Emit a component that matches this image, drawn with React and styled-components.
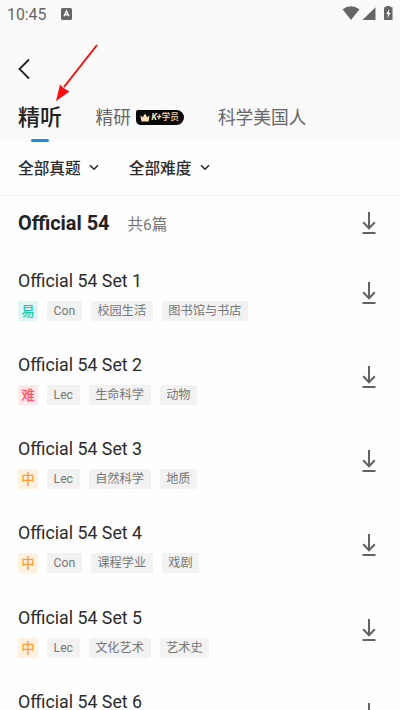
import React from 'react'
import styled, { createGlobalStyle } from 'styled-components'

const levels = {
    easy: { text: '易', color: '#1fc4ab', background: '#e0f6f4' },
    medium: { text: '中', color: '#ff9f33', background: '#fff1e0' },
    hard: { text: '难', color: '#ff5468', background: '#ffe8ea' },
}

const sets = [
    { name: 'Official 54 Set 1', level: 'easy', tags: ['Con', '校园生活', '图书馆与书店'] },
    { name: 'Official 54 Set 2', level: 'hard', tags: ['Lec', '生命科学', '动物'] },
    { name: 'Official 54 Set 3', level: 'medium', tags: ['Lec', '自然科学', '地质'] },
    { name: 'Official 54 Set 4', level: 'medium', tags: ['Con', '课程学业', '戏剧'] },
    { name: 'Official 54 Set 5', level: 'medium', tags: ['Lec', '文化艺术', '艺术史'] },
    { name: 'Official 54 Set 6', tags: [] },
]

function DownloadIcon() {
    return (
        <svg width="14" height="24" viewBox="0 0 14 24" fill="none" stroke="#626262" strokeWidth="2">
            <path d="M7 1V17.5M1.2 11.2L7 17.2L12.8 11.2" />
            <path d="M0.5 22H13.5" />
        </svg>
    )
}

function ChevronIcon() {
    return (
        <svg width="10" height="7" viewBox="0 0 10 7" fill="none" stroke="#2b2b2b" strokeWidth="1.6">
            <path d="M1 1.2L5 5.2L9 1.2" />
        </svg>
    )
}

function App() {
    return (
        <Screen>
            <GlobalStyle />
            <Header>
                <StatusBar>
                    <Clock>10:45</Clock>
                    <svg width="11" height="12" viewBox="0 0 11 12">
                        <rect width="11" height="12" rx="1.5" fill="#666" />
                        <path d="M3 8.3L5.5 3L8 8.3M3.9 6.8H7.1" fill="none" stroke="#fafafa" strokeWidth="1.4" />
                    </svg>
                    <StatusIcons>
                        <svg width="52" height="16" viewBox="0 0 52 16" fill="#666">
                            <path d="M0.5 3.2Q9 -2.8 17.5 3.2L9 14Z" />
                            <path d="M33.5 1.3V14H20.5Z" />
                            <path d="M42 1.2H44V0H48.5V1.2H50.5V14H42Z" />
                            <path d="M47.3 3L44.2 8H46L45.4 12L48.6 6.8H46.8Z" fill="#fafafa" />
                        </svg>
                    </StatusIcons>
                </StatusBar>
                <NavBar>
                    <svg width="12" height="22" viewBox="0 0 12 22" fill="none" stroke="#222" strokeWidth="1.8">
                        <path d="M11 1.5L1.5 11L11 20.5" />
                    </svg>
                </NavBar>
                <Tabs>
                    <ActiveTab>精听</ActiveTab>
                    <Tab $left={33.5}>精研</Tab>
                    <MemberBadge>
                        <svg width="10" height="9" viewBox="0 0 10 9" fill="#f7dfb2">
                            <path d="M0.4 2.4L2.8 4.3L5 0.4L7.2 4.3L9.6 2.4L8.6 8.4H1.4Z" />
                        </svg>
                        <MemberText><i>K+</i>学员</MemberText>
                    </MemberBadge>
                    <Tab $left={34.4}>科学美国人</Tab>
                </Tabs>
            </Header>
            <FilterBar>
                <Filter>全部真题<ChevronIcon /></Filter>
                <Filter>全部难度<ChevronIcon /></Filter>
            </FilterBar>
            <SectionHead>
                <SectionTitle>Official 54</SectionTitle>
                <SectionCount>共6篇</SectionCount>
                <DownloadIcon />
            </SectionHead>
            <List>
                {sets.map((set) => (
                    <Row key={set.name}>
                        <div>
                            <SetName>{set.name}</SetName>
                            <TagList>
                                {set.level && <Level $level={levels[set.level]}>{levels[set.level].text}</Level>}
                                {set.tags.map((tag) => <Tag key={tag}>{tag}</Tag>)}
                            </TagList>
                        </div>
                        <DownloadIcon />
                    </Row>
                ))}
            </List>
            <Pointer width="50" height="64" viewBox="0 0 50 64">
                <path d="M47 5L14 47" stroke="#fb0d0d" strokeWidth="2" />
                <path d="M6 61L10 44.5L13.5 48L19.5 51.5Z" fill="#fb0d0d" />
            </Pointer>
        </Screen>
    )
}

export default App

const GlobalStyle = createGlobalStyle`
* {
    box-sizing: border-box;
}
body {
    margin: 0;
    background: #fefefe;
    overflow: hidden;
    font-family: Roboto, "Noto Sans CJK SC", sans-serif;
}
svg {
    display: block;
    flex-shrink: 0;
}
`

const Screen = styled.div`
position: relative;
width: 400px;
height: 710px;
overflow: hidden;
background: #fefefe;
color: #2b2b2b;
`

const Header = styled.header`
height: 142px;
background: #fafafa;
`

const StatusBar = styled.div`
display: flex;
align-items: center;
height: 28px;
padding: 0 6px 0 7px;
`

const Clock = styled.span`
width: 54px;
font-size: 15.8px;
color: #666;
`

const StatusIcons = styled.div`
margin-left: auto;
`

const NavBar = styled.div`
display: flex;
align-items: center;
height: 66px;
padding: 15px 18px 0;
`

const Tabs = styled.nav`
display: flex;
align-items: center;
height: 48px;
padding-left: 18px;
`

const Tab = styled.span`
margin-left: ${(props) => props.$left}px;
font-size: 17.7px;
line-height: 26px;
color: #666;
white-space: nowrap;
`

const ActiveTab = styled.span`
position: relative;
font-size: 22px;
line-height: 32px;
font-weight: 500;
color: #222;
&::after {
    content: '';
    position: absolute;
    left: 13px;
    bottom: -8px;
    width: 18px;
    height: 3px;
    border-radius: 2px;
    background: #168fe8;
}
`

const MemberBadge = styled.span`
display: flex;
align-items: center;
gap: 2px;
width: 48px;
height: 15px;
margin: -1px 0 0 4.6px;
padding-left: 4px;
border-radius: 2px 8px 8px 5px;
background: #0b0a0a;
`

const MemberText = styled.span`
font-size: 8.7px;
line-height: 15px;
font-weight: 500;
color: #f7dfb2;
white-space: nowrap;
i {
    font-weight: 800;
}
`

const FilterBar = styled.div`
display: flex;
align-items: center;
gap: 30px;
height: 54px;
padding: 0 0 2px 18px;
border-bottom: 1px solid #f0f0f0;
`

const Filter = styled.div`
display: flex;
align-items: center;
gap: 8px;
font-size: 15.7px;
font-weight: 500;
`

const SectionHead = styled.div`
display: flex;
align-items: center;
height: 54px;
padding-right: 24px;
padding-left: 18px;
svg {
    margin-left: auto;
}
`

const SectionTitle = styled.h2`
margin: 0;
font-size: 19.9px;
font-weight: 700;
color: #222;
`

const SectionCount = styled.span`
margin-left: 18px;
font-size: 15.5px;
color: #777;
`

const List = styled.div`
padding: 2.4px 24px 0 18px;
`

const Row = styled.div`
display: flex;
align-items: center;
justify-content: space-between;
height: 84.3px;
> svg {
    margin-bottom: 4px;
}
`

const SetName = styled.div`
font-size: 17.8px;
line-height: 23px;
`

const TagList = styled.div`
display: flex;
gap: 9px;
margin-top: 9px;
height: 20px;
`

const Tag = styled.span`
height: 20px;
padding: 0 6.6px;
border-radius: 2px;
background: #f2f2f2;
font-size: 12.2px;
line-height: 21px;
color: #777;
white-space: nowrap;
`

const Level = styled.span`
width: 20px;
height: 20px;
border-radius: 2px;
background: ${(props) => props.$level.background};
color: ${(props) => props.$level.color};
font-size: 13.5px;
font-weight: 500;
line-height: 20px;
text-align: center;
`

const Pointer = styled.svg`
position: absolute;
top: 40px;
left: 50px;
`
